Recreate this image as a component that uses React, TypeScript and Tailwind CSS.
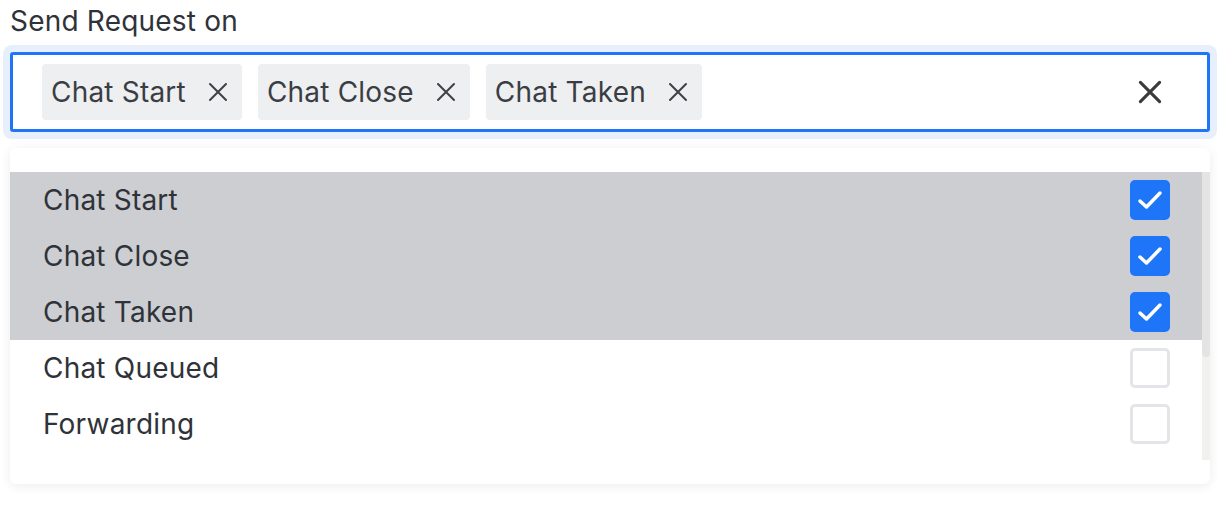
import React from 'react';

const font = { fontFamily: 'Inter, "Noto Sans", sans-serif' };

const XIcon = ({ size = 20, stroke = 2 }: { size?: number; stroke?: number }) => (
  <svg width={size} height={size} viewBox="0 0 20 20" fill="none" stroke="currentColor" strokeWidth={stroke} strokeLinecap="round">
    <path d="M2 2L18 18M18 2L2 18" />
  </svg>
);

const tags = ['Chat Start', 'Chat Close', 'Chat Taken'];

const options = [
  { label: 'Chat Start', checked: true },
  { label: 'Chat Close', checked: true },
  { label: 'Chat Taken', checked: true },
  { label: 'Chat Queued', checked: false },
  { label: 'Forwarding', checked: false },
];

const Checkbox = ({ checked }: { checked: boolean }) =>
  checked ? (
    <div className="w-[40px] h-[40px] rounded-[5px] bg-[#1f75f7] flex items-center justify-center">
      <svg width="26" height="22" viewBox="0 0 26 22" fill="none" stroke="white" strokeWidth="3.5" strokeLinecap="round" strokeLinejoin="round">
        <path d="M3 12L9.5 18L23 4" />
      </svg>
    </div>
  ) : (
    <div className="w-[40px] h-[40px] rounded-[5px] bg-white border-[3px] border-[#e4e5e8]" />
  );

export default function App() {
  return (
    <div className="w-[1228px] h-[518px] bg-white overflow-hidden pl-[10px] pr-[18px] pt-[4px]" style={font}>
      <div className="text-[28px] tracking-[0.2px] leading-[34px] text-[#2f3339] mb-[14px]">Send Request on</div>

      <div className="h-[80px] border-[3px] border-[#1f75f7] rounded-[3px] shadow-[0_0_0_7px_#e7effc] flex items-center pl-[29px] pr-[45px]">
        <div className="flex-1 flex items-center gap-[16px]">
          {tags.map((t) => (
            <div key={t} className="h-[56px] rounded-[4px] bg-[#eeeff1] flex items-center pl-[9px] pr-[14px] gap-[22px] text-[28px] tracking-[0.2px] text-[#3a3e44]">
              <span>{t}</span>
              <span className="text-[#3d4046]">
                <XIcon size={20} stroke={2} />
              </span>
            </div>
          ))}
        </div>
        <span className="text-[#3b3b3d]">
          <XIcon size={24} stroke={2.6} />
        </span>
      </div>

      <div className="mt-[16px] h-[336px] bg-white rounded-[6px] shadow-[0_2px_12px_rgba(0,0,0,0.08)] pt-[24px] pb-[24px] flex">
        <div className="flex-1 flex flex-col overflow-hidden">
          {options.map((o) => (
            <div
              key={o.label}
              className={`h-[56px] shrink-0 flex items-center justify-between pl-[33px] pr-[32px] text-[28px] tracking-[0.2px] text-[#2f3339] ${o.checked ? 'bg-[#cdced2]' : 'bg-white'}`}
            >
              <span>{o.label}</span>
              <Checkbox checked={o.checked} />
            </div>
          ))}
        </div>
        <div className="w-[8px] bg-[#f1f1f0] flex flex-col">
          <div className="h-[185px] bg-[#e4e4e4] rounded-b-[4px]" />
        </div>
      </div>
    </div>
  );
}
